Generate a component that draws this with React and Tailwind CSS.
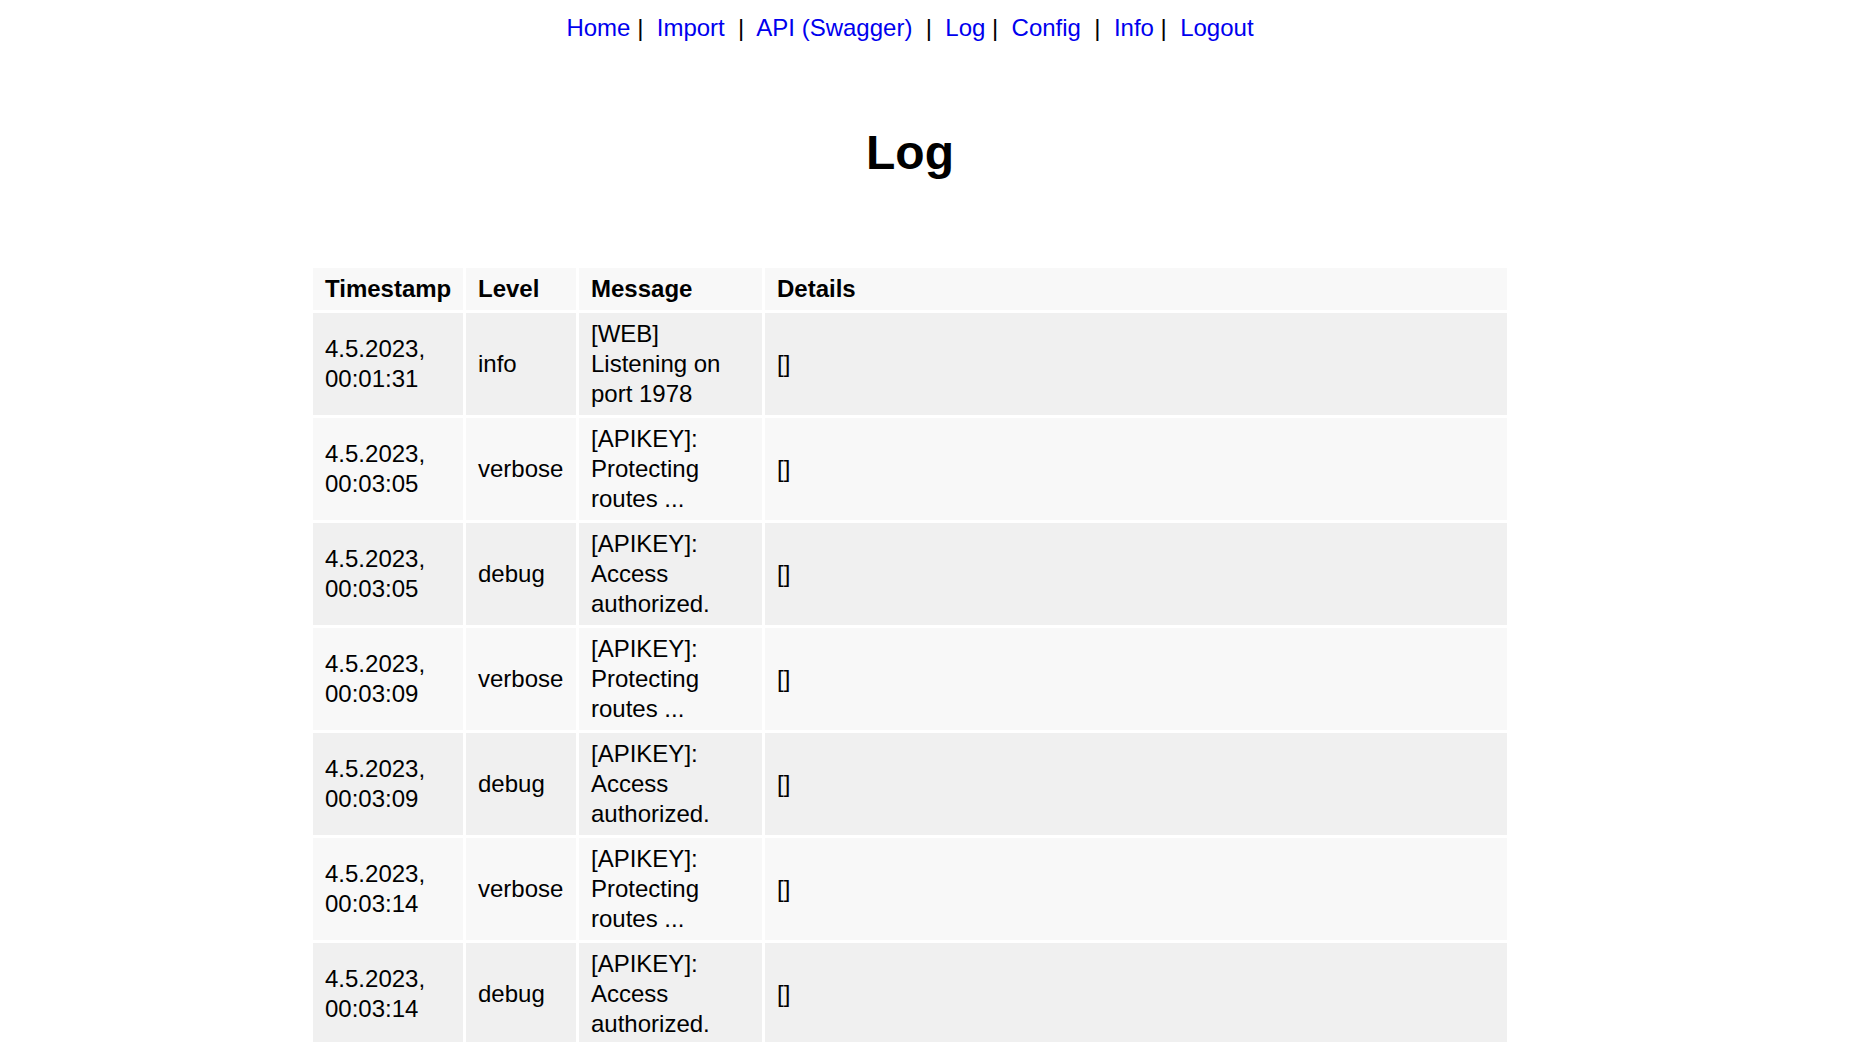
import React from "react";

const rows = [
  ["4.5.2023, 00:01:31", "info", "[WEB] Listening on port 1978"],
  ["4.5.2023, 00:03:05", "verbose", "[APIKEY]: Protecting routes ..."],
  ["4.5.2023, 00:03:05", "debug", "[APIKEY]: Access authorized."],
  ["4.5.2023, 00:03:09", "verbose", "[APIKEY]: Protecting routes ..."],
  ["4.5.2023, 00:03:09", "debug", "[APIKEY]: Access authorized."],
  ["4.5.2023, 00:03:14", "verbose", "[APIKEY]: Protecting routes ..."],
  ["4.5.2023, 00:03:14", "debug", "[APIKEY]: Access authorized."],
  ["4.5.2023, 00:03:18", "verbose", "[APIKEY]: Protecting routes ..."],
];

function L({ children }) {
  return <a href="#" className="text-[#0000ee] no-underline">{children}</a>;
}

export default function App() {
  return (
    <div
      className="w-[1820px] bg-white text-black pb-10"
      style={{ fontFamily: '"Liberation Sans", Arial, sans-serif' }}
    >
      <nav className="pt-[14px] text-center text-[24px] leading-[28px] whitespace-pre">
        <L>Home</L>{" |  "}<L>Import</L>{"  |  "}<L>API (Swagger)</L>{"  |  "}<L>Log</L>{" |  "}<L>Config</L>{"  |  "}<L>Info</L>{" |  "}<L>Logout</L>
      </nav>
      <h1 className="mt-[83px] text-center text-[48px] leading-[56px] font-bold">Log</h1>
      <table className="mt-[84px] mx-auto w-[1200px] table-fixed border-separate border-spacing-[3px] text-[24px] leading-[30px]">
        <thead>
          <tr className="bg-[#f8f8f8]">
            <th className="w-[150px] px-3 py-1.5 text-left font-bold">Timestamp</th>
            <th className="w-[110px] px-3 py-1.5 text-left font-bold">Level</th>
            <th className="w-[183px] px-3 py-1.5 text-left font-bold">Message</th>
            <th className="px-3 py-1.5 text-left font-bold">Details</th>
          </tr>
        </thead>
        <tbody>
          {rows.map((r, i) => (
            <tr key={i} className={i % 2 === 0 ? "bg-[#f0f0f0]" : "bg-[#f8f8f8]"}>
              <td className="px-3 py-1.5 align-middle">{r[0]}</td>
              <td className="px-3 py-1.5 align-middle">{r[1]}</td>
              <td className="px-3 py-1.5 align-middle">{r[2]}</td>
              <td className="px-3 py-1.5 align-middle">[]</td>
            </tr>
          ))}
        </tbody>
      </table>
    </div>
  );
}
